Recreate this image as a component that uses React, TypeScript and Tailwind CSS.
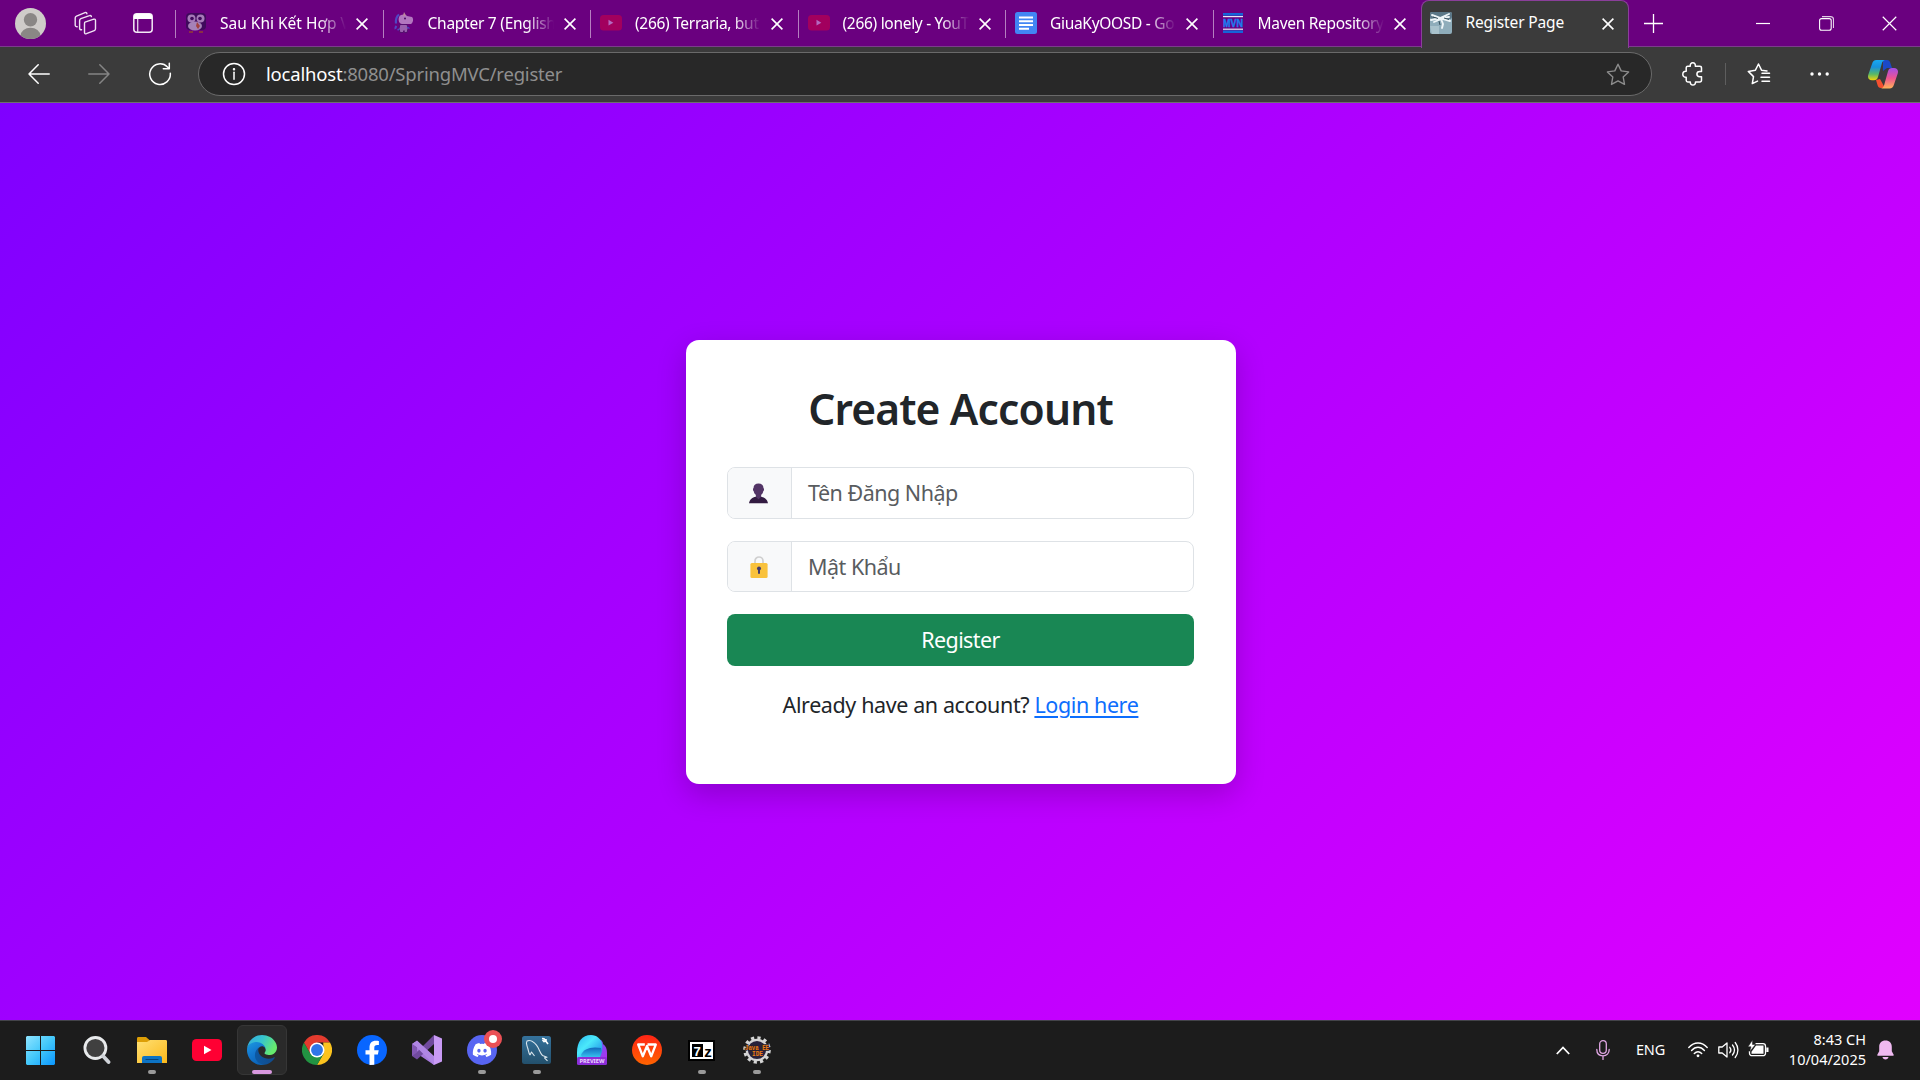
import React from "react";
import { FaDiscord } from "react-icons/fa";

type TabInfo = { title: string; icon: React.ReactNode; track: string };

function Penguin() {
  return (
    <svg width="22" height="22" viewBox="0 0 22 22">
      <rect x="1" y="1" width="20" height="17" rx="4" fill="#3f0a5c" />
      <circle cx="6.5" cy="6.5" r="4" fill="#a67bb8" />
      <circle cx="15.5" cy="6.5" r="4" fill="#a67bb8" />
      <circle cx="7" cy="6.5" r="1.8" fill="#3f0a5c" />
      <circle cx="15" cy="6.5" r="1.8" fill="#3f0a5c" />
      <ellipse cx="10" cy="14" rx="7" ry="4.5" fill="#a682b8" />
      <path d="M12 10l3 4-2 3-2-3z" fill="#a3413f" />
      <path d="M4 20h4M14 20h4" stroke="#8a2f45" strokeWidth="2" />
    </svg>
  );
}

function Unicorn() {
  return (
    <svg width="22" height="22" viewBox="0 0 22 22">
      <path d="M6 5c2-3 6-3 8-1l5 1c2 2 1 6-1 7H9C6 12 5 8 6 5z" fill="#b277bf" />
      <path d="M11 0l2 3.500-3 .5z" fill="#c28a9d" />
      <path d="M6 2.500C3.500 4.500 2.500 7 3 11.500M3.500 14c-1 1-1.500 2-1 3" stroke="#5047c4" strokeWidth="2.200" fill="none" />
      <path d="M7 12.500h7l1 4-1 4h-2.500l-.5-2-1 2H7l-1-4z" fill="#9a60ae" stroke="#4a0a64" strokeWidth=".8" />
      <circle cx="12" cy="6.500" r="1" fill="#4a0a64" />
      <path d="M4.500 18l2-1M14 15l2.500 1.500" stroke="#5047c4" strokeWidth="1.400" />
    </svg>
  );
}

function DimYoutube() {
  return (
    <svg width="22" height="22" viewBox="0 0 22 22">
      <rect x="0" y="3" width="22" height="15.4" rx="3.5" fill="#a2005e" />
      <path d="M8.5 7.8v5.800l4.800-2.900z" fill="#b46ac0" />
    </svg>
  );
}

function Docs() {
  return (
    <svg width="22" height="22" viewBox="0 0 22 22">
      <rect width="22" height="22" rx="2.5" fill="#4285f4" />
      <path d="M4 5.5h14M4 9.3h14M4 13h14M4 16.7h10" stroke="#fff" strokeWidth="2" />
    </svg>
  );
}

function Maven() {
  return (
    <svg className="mr-[2px]" width="20" height="20" viewBox="0 0 20 20">
      <rect width="20" height="2.6" fill="#1565d8" />
      <rect y="3" width="20" height="1.2" fill="#e9e6f5" />
      <rect y="15.6" width="20" height="1.2" fill="#e9e6f5" />
      <rect y="17.4" width="20" height="2.6" fill="#1565d8" />
      <text x="0" y="13.9" fontSize="11" fontWeight="700" textLength="20" lengthAdjust="spacingAndGlyphs" fill="#1c7cf0" stroke="#1c7cf0" strokeWidth=".5" fontFamily="Liberation Sans, sans-serif">MVN</text>
    </svg>
  );
}

function Knot() {
  return (
    <svg width="22" height="22" viewBox="0 0 22 22">
      <rect width="22" height="22" rx="2" fill="#8fadbb" />
      <rect width="22" height="7" rx="2" fill="#5b7787" />
      <path d="M0 14h9v8H2z" fill="#a9c2cc" />
      <path d="M2 3l8 3 9-4M1 8l9-2 10 3M11 7l2 5-1 4M11 7L4 10M12 6l7-1" stroke="#eef5f8" strokeWidth="1.900" fill="none" strokeLinecap="round" />
      <path d="M3 5l5 1.500M14 6l5 1.500M9 9l1 4" stroke="#294350" strokeWidth=".9" />
    </svg>
  );
}

function Close({ size = 12, w = 1.6 }: { size?: number; w?: number }) {
  return (
    <svg width={size} height={size} viewBox="0 0 12 12" fill="none" stroke="#fff" strokeWidth={w}>
      <path d="M.6.6l10.8 10.8M11.4.6L.6 11.4" />
    </svg>
  );
}

const tabs: TabInfo[] = [
  { title: "Sau Khi Kết Hợp V", icon: <Penguin />, track: "tracking-[0px]" },
  { title: "Chapter 7 (English", icon: <Unicorn />, track: "tracking-[-0.25px]" },
  { title: "(266) Terraria, but", icon: <DimYoutube />, track: "tracking-[-0.3px]" },
  { title: "(266) lonely - YouT", icon: <DimYoutube />, track: "tracking-[-0.3px]" },
  { title: "GiuaKyOOSD - Go", icon: <Docs />, track: "tracking-[-0.3px]" },
  { title: "Maven Repository", icon: <Maven />, track: "tracking-[-0.3px]" },
];

function TabStrip() {
  return (
    <div className="flex h-[46px] bg-[#6a007f]">
      <div className="flex w-[175px] shrink-0 items-center">
        <svg className="ml-[15px]" width="31" height="31" viewBox="0 0 31 31">
          <circle cx="15.5" cy="15.5" r="15.5" fill="#cfccc9" />
          <clipPath id="av"><circle cx="15.5" cy="15.5" r="15.5" /></clipPath>
          <circle cx="15.5" cy="11.7" r="6.7" fill="#8a8785" />
          <ellipse cx="15.5" cy="27.5" rx="9.8" ry="7.8" fill="#8a8785" clipPath="url(#av)" />
        </svg>
        <svg className="ml-[27px]" width="24" height="24" viewBox="0 0 24 24" fill="none" stroke="#f0e2f3" strokeWidth="1.400" strokeLinejoin="round" strokeLinecap="round">
          <path d="M12 11.200l8.800-3c1.100-.3 1.700.1 1.700 1.200v8.400c0 .9-.4 1.500-1.200 1.800l-7.900 3.100c-1.100.4-1.900-.1-1.900-1.200v-8.700c0-.8 0-1.300.5-1.600z" />
          <path d="M8.600 18.800c-1.400 0-2-.6-2-1.900V9.700c0-1 .4-1.600 1.300-2l8.600-3.100c1-.4 1.700 0 1.900 1" />
          <path d="M4.200 15.800c-1.300 0-2-.6-2-1.800V7.100c0-1 .4-1.600 1.300-2L12 1.700c1-.4 1.700 0 1.900 1" />
        </svg>
        <svg className="ml-[36px]" width="20" height="20" viewBox="0 0 20 20">
          <rect x=".8" y=".8" width="18.400" height="18.400" rx="3" fill="none" stroke="#f3e9f5" strokeWidth="1.500" />
          <path d="M.8 6V3.500A3 3 0 013.500.8h13a3 3 0 012.700 2.700V6z" fill="#fff" />
          <path d="M4.700 6v13" stroke="#e6d0ea" strokeWidth="1.300" />
        </svg>
      </div>
      {tabs.map((t, i) => (
        <div key={i} className="flex w-[207.500px] shrink-0 items-center">
          <div className="mt-[2px] h-[28px] w-px bg-[#b57fc0]" />
          <div className="ml-[9px] flex w-[22px] justify-center">{t.icon}</div>
          <div className={"ml-[13px] w-[126px] overflow-hidden whitespace-nowrap text-[15.500px] leading-[24px] text-white [mask-image:linear-gradient(to_right,black_78%,transparent_100%)] " + t.track}>{t.title}</div>
          <div className="ml-[10px] mt-[2px]"><Close /></div>
        </div>
      ))}
      <div className="relative z-10 mb-[-2px] ml-[0.500px] flex w-[208px] shrink-0 items-center rounded-t-[8px] border border-b-0 border-[#8a3f9a] bg-[#3b3b3b] pb-[3px]">
        <div className="ml-[8px]"><Knot /></div>
        <div className="ml-[14px] w-[121px] whitespace-nowrap text-[15.500px] tracking-[-0.150px] text-white">Register Page</div>
        <div className="ml-[15px] mt-[2px]"><Close /></div>
      </div>
      <div className="flex flex-1 items-center">
        <svg className="ml-[15px]" width="19" height="19" viewBox="0 0 19 19" stroke="#fff" strokeWidth="1.300"><path d="M9.500 0v19M0 9.500h19" /></svg>
        <svg className="ml-[93px]" width="14" height="14" viewBox="0 0 14 14" stroke="#fff" strokeWidth="1.200"><path d="M0 7.500h14" /></svg>
        <svg className="ml-[49px]" width="15" height="15" viewBox="0 0 15 15" fill="none" stroke="#fff" strokeWidth="1.100">
          <rect x=".6" y="2.600" width="11.600" height="11.600" rx="2" />
          <path d="M3 .6h8.500a3 3 0 013 3V12" strokeOpacity=".8" />
        </svg>
        <div className="ml-[48px]"><Close size={15} w={0.95} /></div>
      </div>
    </div>
  );
}

function Copilot() {
  return (
    <svg width="30" height="29" viewBox="0 0 30 29">
      <defs>
        <linearGradient id="c1" x1="0" y1="0" x2="0" y2="1"><stop stopColor="#18a9f2" /><stop offset=".35" stopColor="#1791dc" /><stop offset=".7" stopColor="#59b867" /><stop offset="1" stopColor="#f2d309" /></linearGradient>
        <linearGradient id="c2" x1="0" y1="0" x2="0" y2="1"><stop stopColor="#a24ee8" /><stop offset=".5" stopColor="#ee5490" /><stop offset="1" stopColor="#ffb357" /></linearGradient>
      </defs>
      <path d="M15 0h4c2 0 3 1.500 3.500 3.500L24 8h-5l-4 3z" fill="#1b49c8" />
      <path d="M8 20l4-1 5 9h-4c-2 0-3-1-3.500-3z" fill="#f4502f" />
      <path d="M8.500 0h8.500c-2 .5-2.800 2-3.300 4L10 17c-.7 2.200-2 3.200-4 3.200H4c-3 0-4.600-2.200-3.800-5.200L4 4C4.800 1.500 6 0 8.500 0z" fill="url(#c1)" />
      <path d="M21.500 28.500H13c2-.5 2.800-2 3.300-4L20 11.200C20.700 9 22 8 24 8h2c3 0 4.600 2.200 3.800 5.200L26 24.500c-.8 2.500-2 4-4.500 4z" fill="url(#c2)" />
    </svg>
  );
}

function Toolbar() {
  return (
    <div className="flex h-[57px] items-center border-t border-b border-t-[#7b3d8b] border-b-[#6e6e6e] bg-[#3b3b3b] pb-[1px]">
      <svg className="mb-[1px] ml-[28px]" width="22" height="20" viewBox="0 0 22 20" fill="none" stroke="#fff" strokeWidth="1.500" strokeLinecap="round" strokeLinejoin="round"><path d="M21.200 10H1M10.200.8L1 10l9.200 9.200" /></svg>
      <svg className="mb-[1px] ml-[38px]" width="22" height="20" viewBox="0 0 22 20" fill="none" stroke="#858585" strokeWidth="1.500" strokeLinecap="round" strokeLinejoin="round"><path d="M.8 10H21M11.800.8L21 10l-9.200 9.200" /></svg>
      <svg className="ml-[38px]" width="24" height="24" viewBox="0 0 24 24" fill="none" stroke="#fff" strokeWidth="1.500" strokeLinecap="round" strokeLinejoin="round"><path d="M22.300 11.200A10.300 10.300 0 1119.500 5l1.500 1.500M21.300 1.200v5.600h-6" /></svg>
      <div className="ml-[26px] flex h-[44px] w-[1454px] items-center rounded-full border border-[#6a6a6a] bg-[#282828]">
        <svg className="ml-[23px]" width="24" height="24" viewBox="0 0 24 24" fill="none" stroke="#fff" strokeWidth="1.500"><circle cx="12" cy="12" r="10.500" /><path d="M12 10.300v7" strokeLinecap="round" /><circle cx="12" cy="7.300" r=".5" fill="#fff" /></svg>
        <div className="ml-[20px] flex-1 whitespace-nowrap pb-[1px] text-[18.500px] tracking-[-0.200px] text-[#8f8f8f]"><span className="text-white">localhost</span>:8080/SpringMVC/register</div>
        <svg className="mr-[21px]" width="24" height="23" viewBox="0 0 24 23" fill="none" stroke="#8d8d8d" strokeWidth="1.400" strokeLinejoin="round"><path d="M12 1.200l3.200 6.700 7.400 1-5.400 5.100 1.300 7.400L12 17.900l-6.500 3.500L6.800 14 1.400 8.900l7.400-1z" /></svg>
      </div>
      <svg className="ml-[30px]" width="22" height="24" viewBox="0 0 22 24" fill="none" stroke="#fff" strokeWidth="1.500" strokeLinejoin="round"><path d="M4.200 5.800c0-1 .6-1.600 1.600-1.600h2.500c-.4-2 .8-3.400 2.500-3.400s2.900 1.400 2.500 3.400h4.400c1.100 0 1.800.7 1.800 1.700v3.600h-1.700c-1.700 0-2.900 1-2.900 2.600 0 1.500 1.200 2.600 2.900 2.600h1.700v3.600c0 1-.7 1.700-1.800 1.700h-4.200c.1 1.900-.9 3.100-2.600 3.100s-2.700-1.200-2.600-3.100H5.800c-1 0-1.600-.6-1.600-1.700v-3.100C2.100 15.400.8 14.200.8 12.200s1.300-3.200 3.400-3z" /></svg>
      <div className="ml-[21px] h-[22px] w-px bg-[#5e5e5e]" />
      <svg className="ml-[21px]" width="24" height="22" viewBox="0 0 24 22" fill="none" stroke="#fff" strokeWidth="1.500" strokeLinejoin="round" strokeLinecap="round"><path d="M20 8l-5.500-.8L11.500 1 8.400 7.200 1.300 8.400l5.200 5.200-1.200 7 5.200-2.500M15 10.200h7.500M14 14.300h8.500M15 18.300h7.500" /></svg>
      <svg className="ml-[39px]" width="20" height="4" viewBox="0 0 20 4" fill="#fff"><circle cx="2" cy="2" r="1.700" /><circle cx="9.500" cy="2" r="1.700" /><circle cx="17.200" cy="2" r="1.700" /></svg>
      <div className="ml-[38px]"><Copilot /></div>
    </div>
  );
}

function Field({ icon, label, size }: { icon: React.ReactNode; label: React.ReactNode; size: string }) {
  return (
    <div className={"flex overflow-hidden rounded-[8px] border border-[#dee2e6] " + size}>
      <div className="flex w-[64px] items-center justify-center border-r border-[#dee2e6] bg-[#f8f9fa]">{icon}</div>
      <div className="flex flex-1 items-center whitespace-nowrap pl-[16px] text-[21.500px] text-[#595c5f]">{label}</div>
    </div>
  );
}

function Page() {
  return (
    <div className="flex flex-1 justify-center bg-[linear-gradient(135deg,#7f00ff,#e100ff)]">
      <div className="mt-[237px] ml-[2px] flex h-[444px] w-[550px] flex-col items-center rounded-[13px] bg-white pl-[41px] pr-[42px] pt-[41px] shadow-[0_10px_30px_rgba(0,0,0,0.2)]">
        <h2 className="h-[60px] whitespace-nowrap text-[42.500px] font-semibold leading-[56px] tracking-[-0.850px] text-[#212529]">Create Account</h2>
        <div className="mt-[26px] flex w-full flex-col">
          <Field
            size="h-[52px]"
            label={<span className="tracking-[-0.5px]">Tên Đăng Nhập</span>}
            icon={
              <svg className="mr-[3px]" width="19" height="21" viewBox="0 0 20 22">
                <path d="M10 .5c3.300 0 5.200 1.700 5.200 4.800.9.300.8 2.700-.2 3.200-.3 1.700-1.200 3-2.200 3.900v3.200L10 18l-2.800-2.400v-3.200c-1-.9-1.900-2.200-2.200-3.900-1-.5-1.100-2.900-.2-3.200C4.800 2.200 6.700.5 10 .5z" fill="#533566" />
                <path d="M7 14.500L10 17l3-2.500c3.500 1 6 2 7 6.800H0c1-4.800 3.500-5.800 7-6.800z" fill="#321b41" />
              </svg>
            }
          />
          <div className="h-[22px]" />
          <Field
            size="h-[51px]"
            label={<span className="pt-[1px] tracking-[-0.5px]">Mật Khẩu</span>}
            icon={
              <svg className="mr-[1px]" width="18" height="22" viewBox="0 0 18 22">
                <path d="M5 9V5a4 4 0 018 0v4" fill="none" stroke="#cfcfcf" strokeWidth="1.700" />
                <rect x=".4" y="7" width="17.200" height="15" rx="1.500" fill="#f9c23c" />
                <circle cx="9" cy="12.500" r="2" fill="#433b6b" /><rect x="8" y="13" width="2" height="5" rx="1" fill="#433b6b" />
              </svg>
            }
          />
          <button className="mt-[22px] h-[52px] rounded-[8px] bg-[#198754] text-[21.500px] tracking-[-0.6px] text-white">Register</button>
        </div>
        <p className="mt-[23px] whitespace-nowrap text-[21.500px] leading-[32px] tracking-[-0.390px] text-[#212529]">
          Already have an account? <span className="text-[#0d6efd] underline decoration-[2px] underline-offset-[3px]">Login here</span>
        </p>
      </div>
    </div>
  );
}

const appIcons: { el: React.ReactNode; mark?: "dot" | "active" }[] = [
  {
    mark: "dot",
    el: (
      <svg width="30" height="26" viewBox="0 0 30 26">
        <defs><linearGradient id="fo" x1="0" y1="0" x2="1" y2="1"><stop stopColor="#ffe074" /><stop offset="1" stopColor="#fbb81a" /></linearGradient></defs>
        <path d="M0 6V1.500C0 .5.500 0 1.500 0H9l4 3.500L10 6z" fill="#dd9e06" />
        <path d="M0 5h10l3-2h15.500c1 0 1.500.500 1.500 1.500V26H0z" fill="url(#fo)" />
        <path d="M5 26v-5a2 2 0 012-2h16a2 2 0 012 2v5z" fill="#0d73c4" />
        <path d="M9 22.500h12" stroke="#06447c" strokeWidth="1.200" strokeLinecap="round" />
      </svg>
    ),
  },
  {
    el: (
      <svg width="30" height="22" viewBox="0 0 30 22"><rect width="30" height="22" rx="4.500" fill="#ff0033" /><path d="M12 6.700v8.600l7.500-4.300z" fill="#fff" /></svg>
    ),
  },
  {
    mark: "active",
    el: (
      <svg width="30" height="30" viewBox="0 0 256 256">
        <defs>
          <linearGradient id="e1" x1="0" y1="0" x2="1" y2="0"><stop stopColor="#0c59a4" /><stop offset="1" stopColor="#114a8b" /></linearGradient>
          <linearGradient id="e2" x1="0" y1="0" x2=".5" y2="1"><stop stopColor="#1b9de2" /><stop offset=".5" stopColor="#1479d0" /><stop offset="1" stopColor="#0a63b8" /></linearGradient>
          <linearGradient id="e3" x1="0" y1="0" x2="1" y2=".4"><stop stopColor="#35a9dd" /><stop offset=".5" stopColor="#36c4d0" /><stop offset="1" stopColor="#66eb6e" /></linearGradient>
        </defs>
        <path d="M231 190.500c-3.400 1.800-6.900 3.400-10.500 4.700-11.500 4.300-23.600 6.500-35.900 6.500-47.300 0-88.500-32.500-88.500-74.300.1-11.400 6.400-21.900 16.400-27.300-42.800 1.800-53.800 46.400-53.800 72.500 0 73.900 68.100 81.400 82.800 81.400 7.900 0 19.800-2.300 27-4.600l1.300-.4c27.600-9.500 51-28.100 66.600-52.800 1.200-1.900.6-4.300-1.200-5.500-1.300-.8-2.900-.9-4.200-.2z" fill="url(#e1)" />
        <path d="M105.700 241.400c-8.900-5.500-16.600-12.800-22.700-21.300-26.300-36-18.400-86.500 17.600-112.800 3.800-2.700 7.700-5.200 11.900-7.200 3.100-1.500 8.400-4.100 15.500-4 10.100.1 19.600 4.900 25.700 13 4 5.400 6.300 11.900 6.400 18.700 0-.2 24.500-79.600-80-79.600-43.900 0-80 41.700-80 78.200-.2 19.300 4 38.500 12.100 56 27.600 58.800 94.800 87.600 156.400 67.100-21.100 6.600-44.100 3.700-62.900-8.100z" fill="url(#e2)" />
        <path d="M152.300 148.900c-.8 1-3.300 2.500-3.300 5.700 0 2.600 1.700 5.100 4.700 7.200 14.400 10 41.500 8.700 41.600 8.700 10.700 0 21.100-2.900 30.300-8.300 18.800-11 30.400-31.200 30.400-53 .3-22.400-8-37.300-11.300-43.900C223.500 23.900 177.700 0 128 0 58 0 1 56.200 0 126.200c.5-36.500 36.800-66 80-66 3.500 0 23.500.3 42 10.100 16.300 8.600 24.900 18.900 30.800 29.200 6.200 10.700 7.300 24.100 7.300 29.500 0 5.300-2.700 13.300-7.800 19.900z" fill="url(#e3)" />
      </svg>
    ),
  },
  {
    el: (
      <svg width="30" height="30" viewBox="0 0 48 48">
        <path d="M24 24L3.200 12A24 24 0 0144.800 12H24z" fill="#e33b2e" />
        <path d="M44.800 12A24 24 0 0124 48l10.400-18L34 12z" fill="#fcc31e" />
        <path d="M3.200 12A24 24 0 0024 48l10.400-18H13.600z" fill="#229342" />
        <path d="M3.200 12h41.600L40 12H24l-10.400 18z" fill="#e33b2e" />
        <circle cx="24" cy="24" r="12" fill="#fff" /><circle cx="24" cy="24" r="9.500" fill="#2f76e8" />
      </svg>
    ),
  },
  {
    el: (
      <svg width="30" height="30" viewBox="0 0 30 30"><circle cx="15" cy="15" r="15" fill="#0866ff" /><path d="M12.500 30V19.500H8.500v-4.300h4v-2.400c0-4.600 2.100-7 6.500-7 .9 0 2.300.2 2.900.3v4c-.3 0-.9-.1-1.600-.1-2.200 0-3 .8-3 3v2.200h4.400l-.8 4.300h-3.600V29.800z" fill="#fff" /></svg>
    ),
  },
  {
    el: (
      <svg width="30" height="30" viewBox="0 0 30 30">
        <path d="M0 9l5-3 17 16v8L5 18.500 6 18z" fill="#a578da" />
        <path d="M0 9v12l5 3.500L22 9V0L5 17V12z" fill="#704a9e" />
        <path d="M0 9l5-3.500L22 21v9L5 12.500z" fill="#b086e4" />
        <path d="M22 0l8 3.500v23L22 30z" fill="#c99af5" />
        <path d="M0 21V9l5 3.500v5z" fill="#8358b4" />
      </svg>
    ),
  },
  {
    mark: "dot",
    el: (
      <div className="relative flex h-[30px] w-[30px] items-center justify-center rounded-full bg-[#5865f2]">
        <FaDiscord size={20} color="#fff" />
        <div className="absolute -top-[5px] left-[17px] flex h-[18px] w-[18px] items-center justify-center rounded-full bg-[#eb5055]"><div className="h-[8px] w-[8px] rounded-full bg-white" /></div>
      </div>
    ),
  },
  {
    mark: "dot",
    el: (
      <svg width="29" height="28" viewBox="0 0 29 28">
        <defs><linearGradient id="my" x1="0" y1="0" x2="0" y2="1"><stop stopColor="#35729c" /><stop offset="1" stopColor="#23506c" /></linearGradient></defs>
        <rect width="29" height="28" rx="2.500" fill="url(#my)" />
        <path d="M8 19c-1.500-2-1.500-5-2.500-7.500C4.800 9 3.500 7 5 5c3-1.500 7 1 9.500 4.200 3 3.800 3.500 8.300 6 10.300l4.500 1.800-2.500.500 3 3M8 19l1.500-3 3 4" fill="none" stroke="#dbe6ed" strokeWidth="1.100" strokeLinejoin="round" />
        <path d="M20 2.500l2 .2 1.500 2L26 8M20.500 4l1.500 1.500 2-.500 0-2" stroke="#fff" strokeWidth="1.600" fill="none" />
      </svg>
    ),
  },
  {
    el: (
      <svg className="ml-[1px]" width="31" height="30" viewBox="0 0 31 30">
        <defs>
          <linearGradient id="p1" x1="0" y1="0" x2="1" y2="1"><stop stopColor="#2ab8f0" /><stop offset=".4" stopColor="#4be9fb" /><stop offset="1" stopColor="#1479e0" /></linearGradient>
          <linearGradient id="p2" x1="0" y1="0" x2="1" y2="1"><stop stopColor="#3c7af2" /><stop offset="1" stopColor="#b52af0" /></linearGradient>
          <linearGradient id="p3" x1="0" y1="0" x2="0" y2="1"><stop stopColor="#1268bd" /><stop offset="1" stopColor="#35c0ee" /></linearGradient>
        </defs>
        <path d="M17 4c6-1 9 2 9 5 3 2 4 5 4 9v6H14z" fill="url(#p2)" />
        <path d="M0 24v-7C0 7 5 0 14 0c6 0 10 4 11 9 1 6-1 15-6 15z" fill="url(#p1)" />
        <path d="M4 20c2-6 10-9 20-7 1 3 0 6-1 9H5z" fill="url(#p3)" />
        <rect y="22" width="30" height="8" rx="1.500" fill="#8c2ed8" />
        <text x="2.500" y="28.300" fontSize="5.800" fontWeight="700" fill="#eed9ff" textLength="25" lengthAdjust="spacingAndGlyphs" fontFamily="Noto Sans, sans-serif">PREVIEW</text>
      </svg>
    ),
  },
  {
    el: (
      <svg width="30" height="30" viewBox="0 0 30 30">
        <defs><linearGradient id="wp" x1="0" y1="0" x2="0" y2="1"><stop stopColor="#ff2415" /><stop offset="1" stopColor="#ff6400" /></linearGradient></defs>
        <circle cx="15" cy="15" r="15" fill="url(#wp)" />
        <path d="M12.800 9.500H6.200l4.600 11.800 4.200-10.300 4.200 10.300 4.600-11.800H15.500" fill="none" stroke="#fff" strokeWidth="2.300" strokeLinejoin="round" />
      </svg>
    ),
  },
  {
    mark: "dot",
    el: (
      <svg width="27" height="21" viewBox="0 0 27 21">
        <rect width="27" height="21" fill="#000" /><rect x="2" y="2" width="23" height="17" fill="#fff" /><rect x="4" y="4" width="11" height="13" fill="#000" />
        <text x="5.500" y="15.500" fontSize="13" fontWeight="700" fill="#fff" fontFamily="Liberation Sans, sans-serif">7</text>
        <text x="16.200" y="17" fontSize="15" fontWeight="700" fill="#000" fontFamily="Liberation Sans, sans-serif">z</text>
      </svg>
    ),
  },
  {
    mark: "dot",
    el: (
      <svg width="28" height="28" viewBox="0 0 28 28">
        <circle cx="14" cy="14" r="12.200" fill="none" stroke="#d4d4d4" strokeWidth="3.200" strokeDasharray="3.200 3.190" />
        <circle cx="14" cy="14" r="10.200" fill="#29223b" stroke="#d4d4d4" strokeWidth="2.200" />
        <text x="2" y="13.500" fontSize="7.500" fontWeight="700" fill="#ee7d14" stroke="#2a2028" strokeWidth="1.500" paintOrder="stroke" textLength="24" lengthAdjust="spacingAndGlyphs" fontFamily="Liberation Mono, monospace">Java EE</text>
        <text x="9" y="19.500" fontSize="7.500" fontWeight="700" fill="#ee7d14" textLength="11" lengthAdjust="spacingAndGlyphs" fontFamily="Liberation Mono, monospace">IDE</text>
      </svg>
    ),
  },
];

function Taskbar() {
  return (
    <div className="flex h-[60px] border-t border-[#44444a] bg-[#1c1c1c]">
      <div className="ml-[26px] flex w-[29px] items-center">
        <svg width="29" height="29" viewBox="0 0 29 29">
          <defs><linearGradient id="w" x1="0" y1="0" x2="29" y2="29" gradientUnits="userSpaceOnUse"><stop stopColor="#8fe4ff" /><stop offset=".5" stopColor="#43c8fb" /><stop offset="1" stopColor="#0a96ff" /></linearGradient></defs>
          <path d="M1 0h13v14H0V1zM15 0h13l1 1v13H15zM0 15h14v14H1l-1-1zM15 15h14v13l-1 1H15z" fill="url(#w)" />
        </svg>
      </div>
      <div className="ml-[28px] flex w-[27px] items-center">
        <svg className="shrink-0" width="28" height="29" viewBox="0 0 28 29">
          <circle cx="12.400" cy="12" r="10.500" fill="#404040" stroke="#e8eaec" strokeWidth="2.800" />
          <path d="M20 20l5.500 6" stroke="#cfd3d8" strokeWidth="3.800" strokeLinecap="round" />
        </svg>
      </div>
      <div className="ml-[14px] flex">
        {appIcons.map((a, i) => (
          <div key={i} className="flex w-[55px] justify-center pt-[4px]">
            <div className={"relative flex h-[50px] w-[50px] items-center justify-center rounded-[6px] " + (a.mark === "active" ? "border border-[#363636] bg-[#2a2a2a]" : "")}>
              {a.el}
              {a.mark === "dot" && <div className="absolute bottom-[1px] left-[21px] h-[4px] w-[8px] rounded-full bg-[#9a9a9a]" />}
              {a.mark === "active" && <div className="absolute bottom-0 left-[14px] h-[4px] w-[20px] rounded-full bg-[#d898de]" />}
            </div>
          </div>
        ))}
      </div>
      <div className="flex flex-1 items-center justify-end pb-[1px] text-white">
        <svg width="14" height="9" viewBox="0 0 14 9" fill="none" stroke="#fff" strokeWidth="1.800"><path d="M.8 8L7 1.500 13.200 8" /></svg>
        <svg className="ml-[26px]" width="14" height="20" viewBox="0 0 14 20" fill="none" stroke="#e0a6e3" strokeWidth="1.300" strokeLinecap="round"><rect x="3.700" y=".7" width="6.600" height="12.600" rx="3.300" /><path d="M.8 9.500c0 4 2.500 6.300 6.200 6.300s6.200-2.300 6.200-6.300M7 16v3.500" /></svg>
        <div className="ml-[26px] w-[30px] whitespace-nowrap text-[14.500px] tracking-[-0.2px]">ENG</div>
        <svg className="ml-[22px]" width="20" height="16" viewBox="0 0 20 16" fill="none" stroke="#fff" strokeWidth="1.400" strokeLinecap="round"><path d="M.8 5.500C6-.6 14-.6 19.200 5.500M3.600 8.500c3.800-4.300 9-4.300 12.800 0M6.300 11.400c2.200-2.300 5.200-2.300 7.400 0" /><circle cx="10" cy="13.800" r="1.400" fill="#fff" stroke="none" /></svg>
        <svg className="ml-[10px]" width="21" height="18" viewBox="0 0 21 18" fill="none" stroke="#fff" strokeWidth="1.300" strokeLinejoin="round" strokeLinecap="round"><path d="M.8 6h3.400L9 2v14l-4.800-4H.8zM11.800 6.300c1.300 1.600 1.300 3.800 0 5.400M14.500 4c2.400 3 2.400 7 0 10M17.200 1.500c3.600 4.500 3.600 10.500 0 15" /></svg>
        <svg className="mb-[2px] ml-[9px]" width="21" height="18" viewBox="0 0 21 18"><path d="M7.500 3.700H15A2.500 2.500 0 0117.500 6.200v7A2.500 2.500 0 0115 15.700H4a2.500 2.500 0 01-2.500-2.500V11" fill="none" stroke="#fff" strokeWidth="1.300" /><path d="M8 5.600h7.500v8.200H3.500v-2z" fill="#fff" /><path d="M18.300 7.500H20.500V12h-2.200z" fill="#fff" /><path d="M4.500 0L0 6.800h3L1.800 11.500 7.500 4.500h-3z" fill="#fff" stroke="#1c1c1c" strokeWidth=".5" /></svg>
        <div className="ml-[13px] flex w-[84px] flex-col items-end whitespace-nowrap pb-[2px] text-[14.500px] leading-[20px]"><span>8:43 CH</span><span>10/04/2025</span></div>
        <svg className="ml-[11px] mr-[26px]" width="17" height="20" viewBox="0 0 17 20" fill="#efb9f0"><path d="M8.500.5c4 0 6.300 2.600 6.300 6.500v4.200l1.900 3.600c.2.600 0 .9-.6.900H.9c-.6 0-.8-.3-.6-.9l1.900-3.600V7c0-3.900 2.300-6.500 6.300-6.500zM5.500 17h6c-.2 1.500-1.400 2.500-3 2.500S5.700 18.500 5.500 17z" /></svg>
      </div>
    </div>
  );
}

export default function App() {
  return (
    <div className="flex h-[1080px] w-[1920px] flex-col overflow-hidden font-['Noto_Sans',sans-serif]">
      <TabStrip />
      <Toolbar />
      <Page />
      <Taskbar />
    </div>
  );
}
